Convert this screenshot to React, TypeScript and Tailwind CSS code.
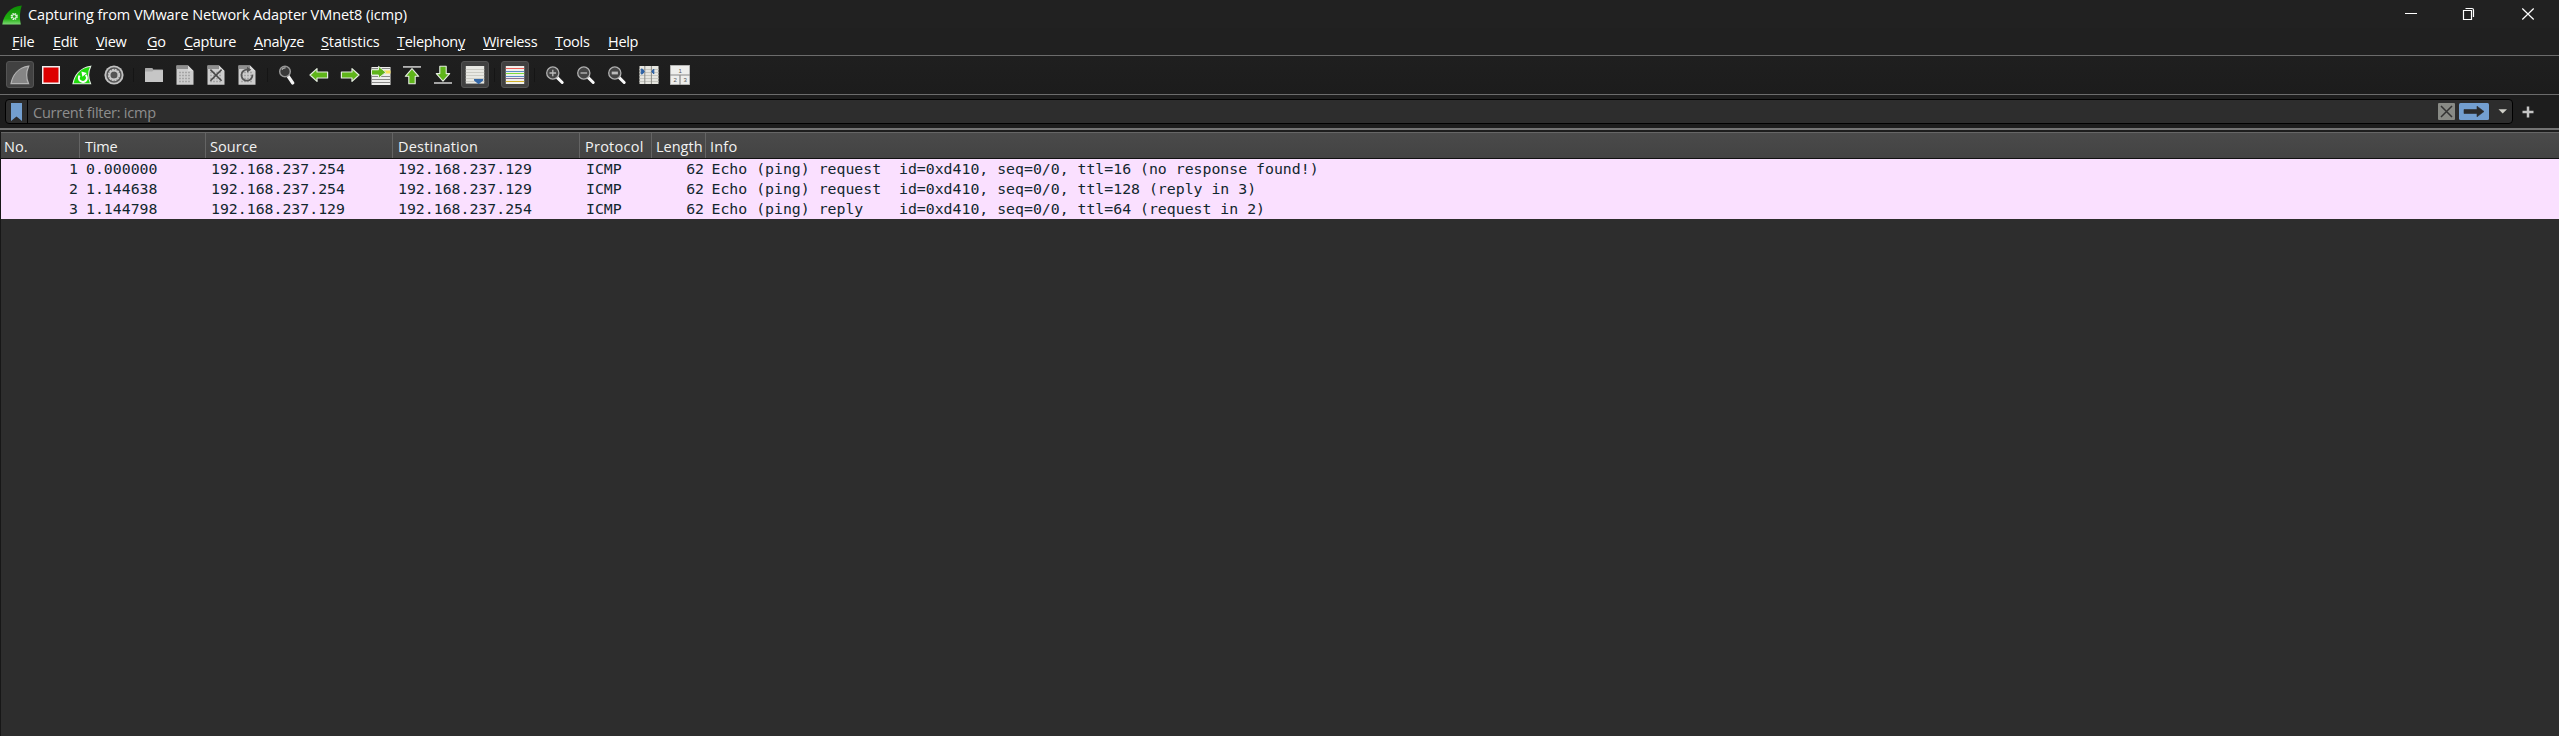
import type { ReactNode } from "react";

const UI = "font-['Open_Sans','Noto_Sans',sans-serif]";

const menus: { key: string; rest: string; width: string; spacing: string }[] = [
  { key: "F", rest: "ile", width: "w-[41px]", spacing: "tracking-[-0.1px]" },
  { key: "E", rest: "dit", width: "w-[43px]", spacing: "tracking-[-0.3px]" },
  { key: "V", rest: "iew", width: "w-[51px]", spacing: "tracking-[-0.3px]" },
  { key: "G", rest: "o", width: "w-[37px]", spacing: "tracking-[-0.2px]" },
  { key: "C", rest: "apture", width: "w-[70px]", spacing: "tracking-[-0.3px]" },
  { key: "A", rest: "nalyze", width: "w-[67px]", spacing: "tracking-[-0.25px]" },
  { key: "S", rest: "tatistics", width: "w-[76px]", spacing: "tracking-[-0.1px]" },
  { key: "T", rest: "elephon", width: "w-[86px]", spacing: "tracking-[-0.3px]" },
  { key: "W", rest: "ireless", width: "w-[72px]", spacing: "tracking-[-0.3px]" },
  { key: "T", rest: "ools", width: "w-[53px]", spacing: "tracking-[-0.3px]" },
  { key: "H", rest: "elp", width: "w-[50px]", spacing: "tracking-[-0.3px]" },
];

const packets = [
  { no: "1", time: "0.000000", src: "192.168.237.254", dst: "192.168.237.129", info: "Echo (ping) request  id=0xd410, seq=0/0, ttl=16 (no response found!)" },
  { no: "2", time: "1.144638", src: "192.168.237.254", dst: "192.168.237.129", info: "Echo (ping) request  id=0xd410, seq=0/0, ttl=128 (reply in 3)" },
  { no: "3", time: "1.144798", src: "192.168.237.129", dst: "192.168.237.254", info: "Echo (ping) reply    id=0xd410, seq=0/0, ttl=64 (request in 2)" },
];

function Icon({ children }: { children: ReactNode }) {
  return (
    <svg viewBox="0 0 20 20" className="block h-5 w-5 shrink-0">
      {children}
    </svg>
  );
}

const FIN = "M1 18.7C2.4 11 7.5 2.8 18.7 1.2C15.8 7.5 16 13 18.6 18.7Z";

const Fin = () => (
  <Icon>
    <path d={FIN} fill="#858585" stroke="#b4b4b4" strokeWidth="1.2" />
  </Icon>
);
const Stop = () => (
  <Icon>
    <rect x="1" y="1" width="18" height="18" fill="#eeeeee" />
    <rect x="2.5" y="2.5" width="15" height="15" fill="#dd0000" />
  </Icon>
);
const Restart = () => (
  <Icon>
    <path d={FIN} fill="#1fdc0b" stroke="#e4f5e2" strokeWidth="1.1" />
    <path d="M7.6 10.6A4 4 0 1 0 13.6 10" fill="none" stroke="#fff" strokeWidth="2" />
    <path d="M9.4 6.4L14.8 8L10.4 11.8Z" fill="#fff" />
  </Icon>
);
const Options = () => (
  <Icon>
    <circle cx="10" cy="10" r="9.6" fill="#c2c2c2" />
    <circle cx="10" cy="10" r="7.7" fill="#555" />
    <circle cx="10" cy="10" r="5" fill="none" stroke="#c8c8c8" strokeWidth="2.4" strokeDasharray="2 .62" />
    <circle cx="10" cy="10" r="4.4" fill="none" stroke="#c8c8c8" strokeWidth="1.6" />
  </Icon>
);
const Folder = () => (
  <Icon>
    <path d="M1 4.5V3.4Q1 3 1.5 3H8Q8.6 3 8.8 3.5L9.2 4.6H18.5Q19 4.6 19 5V16.5Q19 17 18.5 17H1.5Q1 17 1 16.5Z" fill="#aaa" />
    <path d="M1 6.6H8.2L9.6 5.2H19V16.5Q19 17 18.5 17H1.5Q1 17 1 16.5Z" fill="#c6c6c6" />
  </Icon>
);
function Sheet({ children }: { children?: ReactNode }) {
  return (
    <Icon>
      <path d="M1.5 .5H13L18.5 6V19.7H1.5Z" fill="#cdcdcd" />
      <path d="M1.5 .5H13V4H1.5Z" fill="#8f8f8f" />
      <path d="M13 .5L18.5 6H13Z" fill="#dadada" />
      <path d="M4 7.5H16M4 10.5H16M4 13.5H16M4 16.5H16" stroke="#a6a6a6" strokeWidth="1.4" strokeDasharray="2 1" />
      {children}
    </Icon>
  );
}
const CloseFile = () => (
  <Sheet>
    <path d="M4.4 4.6L15.6 15.8M15.6 4.6L4.4 15.8" stroke="#484848" strokeWidth="1.6" />
  </Sheet>
);
const Reload = () => (
  <Sheet>
    <path d="M15.4 9.6A5.5 5.5 0 1 1 10.6 4.7" fill="none" stroke="#555" strokeWidth="1.8" />
    <path d="M10 1.8L14.3 4.7L10 7.6Z" fill="#555" />
  </Sheet>
);
const Find = () => (
  <Icon>
    <path d="M11 11L15.7 18" stroke="#f4f4f4" strokeWidth="3.2" strokeLinecap="round" />
    <circle cx="8" cy="6.5" r="5.3" fill="#3a3a3a" stroke="#969696" strokeWidth="1.5" />
    <path d="M4.9 4.6A4 4 0 0 1 8.6 2.9" fill="none" stroke="#bbb" strokeWidth="1.1" />
  </Icon>
);
const ARROW = "M1 10L8 3.6V7H18.6V13H8V16.4Z";
const Back = () => (
  <Icon>
    <path d={ARROW} fill="#5fb51a" stroke="#e5eddf" strokeWidth="1.2" strokeLinejoin="round" />
  </Icon>
);
const Forward = () => (
  <Icon>
    <path d={ARROW} transform="rotate(180 10 10)" fill="#5fb51a" stroke="#e5eddf" strokeWidth="1.2" strokeLinejoin="round" />
  </Icon>
);
const GoTo = () => (
  <Icon>
    <path d="M.5 2H19.5V20H.5Z" fill="#eeeeec" />
    <path d="M.5 3.5H19.5M.5 11.5H19.5M.5 14.5H19.5M.5 17.5H19.5" stroke="#8a8a88" strokeWidth="1" />
    <path d="M13 5.5H19.5V8.5H13Z" fill="#f8e15a" />
    <path d="M.5 4.8H7.5V1.3L14.8 7.3L7.5 13.2V10H.5Z" fill="#5fb51a" stroke="#e5eddf" strokeWidth="1" />
  </Icon>
);
const First = () => (
  <Icon>
    <path d="M1 1.9H19" stroke="#bdbdbd" strokeWidth="1.7" />
    <path d="M10 3.7L16.7 11.3H13.2V18.7H6.8V11.3H3.3Z" fill="#5fb51a" stroke="#e5eddf" strokeWidth="1.1" strokeLinejoin="round" />
  </Icon>
);
const Last = () => (
  <Icon>
    <path d="M1 18H19" stroke="#bdbdbd" strokeWidth="1.7" />
    <path d="M10 16.2L16.7 8.6H13.2V1.2H6.8V8.6H3.3Z" fill="#5fb51a" stroke="#e5eddf" strokeWidth="1.1" strokeLinejoin="round" />
  </Icon>
);
const AutoScroll = () => (
  <Icon>
    <path d="M.8 1H19.2V18.6H.8Z" fill="#e8e8e3" />
    <path d="M.8 4.5H19.2M.8 7.5H19.2M.8 10.5H19.2M.8 13.5H19.2M.8 16.5H19.2" stroke="#cbcbc4" strokeWidth="1" />
    <path d="M9 14H18.2V15.6L13.6 19.2L9 15.6Z" fill="#3367a8" />
  </Icon>
);
const Colorize = () => (
  <Icon>
    <path d="M.8 1H19.2V19H.8Z" fill="#f0f0ec" />
    <path d="M.8 3.5H19.2" stroke="#ee5f58" strokeWidth="1" />
    <path d="M.8 6.5H19.2" stroke="#5b8fc7" strokeWidth="1" />
    <path d="M.8 8.5H19.2" stroke="#7ddd3e" strokeWidth="1" />
    <path d="M.8 11.5H19.2" stroke="#5b8fc7" strokeWidth="1" />
    <path d="M.8 13.5H19.2" stroke="#8a7097" strokeWidth="1" />
    <path d="M.8 16.5H19.2" stroke="#d1b02b" strokeWidth="1" />
  </Icon>
);
function Zoom({ children }: { children: ReactNode }) {
  return (
    <Icon>
      <path d="M12 12.4L17.2 17.5" stroke="#f8f8f8" strokeWidth="3" strokeLinecap="round" />
      <circle cx="7.8" cy="8" r="6.1" fill="#454545" stroke="#b0b0b0" strokeWidth="1.3" />
      {children}
    </Icon>
  );
}
const ZoomIn = () => <Zoom><path d="M4.5 8H11.1M7.8 4.7V11.3" stroke="#bbb" strokeWidth="1.3" /></Zoom>;
const ZoomOut = () => <Zoom><path d="M4.5 8H11.1" stroke="#bbb" strokeWidth="1.3" /></Zoom>;
const ZoomReset = () => <Zoom><path d="M4.7 8H10.9" stroke="#bbb" strokeWidth="2.8" /></Zoom>;
const Resize = () => (
  <Icon>
    <path d="M.5 1H19.5V19H.5Z" fill="#e6e6e0" />
    <path d="M.5 4.5H19.5M.5 7.5H19.5M.5 10.5H19.5M.5 13.5H19.5M.5 16.5H19.5" stroke="#c6c6bf" strokeWidth="1" />
    <path d="M5.8 1V19M12.4 1V19" stroke="#8b8b86" strokeWidth="1" />
    <path d="M2.2 4L3.4 4L5.3 6.5L3.4 9H2.2Z" fill="#2e62a5" stroke="#2e62a5" />
    <path d="M14.8 4V9L12.8 6.5Z" fill="#2e62a5" stroke="#2e62a5" />
  </Icon>
);
const Panes = () => (
  <svg viewBox="0 0 20 20" className="block h-5 w-5 shrink-0 font-['Liberation_Sans',sans-serif] text-[6px]">
    <path d="M.2 .2H19.8V19.8H.2Z" fill="#eeeeec" stroke="#aaa" strokeWidth=".8" />
    <path d="M0 10H20M10 10V20" stroke="#888" strokeWidth="1.2" />
    <text x="8.6" y="7.6" fill="#555">1</text>
    <text x="3.6" y="17.1" fill="#555">2</text>
    <text x="13.6" y="17.1" fill="#555">3</text>
  </svg>
);

const groups: { icon: () => ReactNode; checked?: boolean }[][] = [
  [{ icon: Fin, checked: true }, { icon: Stop }, { icon: Restart }, { icon: Options }],
  [{ icon: Folder }, { icon: () => <Sheet /> }, { icon: CloseFile }, { icon: Reload }],
  [{ icon: Find }, { icon: Back }, { icon: Forward }, { icon: GoTo }, { icon: First }, { icon: Last }, { icon: AutoScroll, checked: true }],
  [{ icon: Colorize, checked: true }],
  [{ icon: ZoomIn }, { icon: ZoomOut }, { icon: ZoomReset }, { icon: Resize }, { icon: Panes }],
];

function TitleBar() {
  return (
    <div className="flex h-7 items-center bg-[#212121] pl-[2px]">
      <svg viewBox="0 0 20 20" className="mt-px h-5 w-5">
        <defs>
          <linearGradient id="logo" x1="0" y1="0" x2="0" y2="1">
            <stop offset="0" stopColor="#0d8a05" />
            <stop offset=".7" stopColor="#20b010" />
            <stop offset="1" stopColor="#7fd877" />
          </linearGradient>
        </defs>
        <path d="M.3 19.5C1.5 10.5 8 1.6 19.8 .6C17.6 6.5 17.4 13 18.8 19.5Z" fill="url(#logo)" />
        <circle cx="12.2" cy="11.5" r="2.8" fill="none" stroke="#e2f4e0" strokeWidth="1.6" strokeDasharray="1.5 .7" />
        <circle cx="12.2" cy="11.5" r="1.9" fill="none" stroke="#e2f4e0" strokeWidth="1" />
      </svg>
      <span className="mt-px ml-[6px] grow text-[14.5px] tracking-[-0.07px] text-white">Capturing from VMware Network Adapter VMnet8 (icmp)</span>
      <svg viewBox="0 0 160 28" className="h-7 w-[160px]" fill="none" stroke="#fff">
        <path d="M6 13.5H18" />
        <path d="M64.5 10.5H72.5V19.5H64.5ZM66.5 8.5H73Q74.5 8.5 74.5 10V17" strokeWidth="1.2" />
        <path d="M123.3 8.5L134.7 19.5M134.7 8.5L123.3 19.5" strokeWidth="1.2" />
      </svg>
    </div>
  );
}

function MenuBar() {
  return (
    <div className="flex h-[27px] items-center bg-[#202020] pl-[12px] text-[14.5px] text-white">
      {menus.map((m) => (
        <div key={m.key + m.rest} className={`${m.width} ${m.spacing} shrink-0 whitespace-nowrap`}>
          <span className="underline decoration-1 underline-offset-2">{m.key}</span>
          {m.rest}
          {m.rest === "elephon" && <span className="underline decoration-1 underline-offset-2">y</span>}
        </div>
      ))}
    </div>
  );
}

function ToolBar() {
  return (
    <div className="flex h-[39px] items-start border-t border-[#6c6c6c] bg-gradient-to-b from-[#1f1f1f] to-[#1c1c1c] pt-[5px] pl-[4.4px]">
      {groups.map((g, i) => (
        <div key={i} className="flex items-center">
          {i > 0 && (
            <div className="flex w-[9px] justify-center">
              <div className="h-[14px] w-px bg-[#151515]" />
            </div>
          )}
          {g.map(({ icon: I, checked }, j) => (
            <div key={j} className="flex w-[31.2px] justify-center">
              <div className={checked ? "flex h-[27px] w-7 items-center justify-center rounded-[3px] border border-[#545454] bg-[#414141]" : "flex h-[27px] w-7 items-center justify-center"}>
                <I />
              </div>
            </div>
          ))}
        </div>
      ))}
    </div>
  );
}

function FilterBar() {
  return (
    <div className="flex h-[34px] items-start border-t border-[#6c6c6c] bg-[#1d1d1d] pt-1 pl-[5px]">
      <div className="flex h-[25px] w-[2508px] items-center rounded-[4px] border border-black bg-[#2d2d2d]">
        <div className="flex h-full w-[22px] items-center justify-center border-r border-black">
          <svg viewBox="0 0 11 18" className="h-[18px] w-[11px]">
            <path d="M0 0H11V18L5.5 13.5L0 18Z" fill="#739fd0" />
          </svg>
        </div>
        <span className="mt-[2px] ml-[5px] grow text-[14.5px] tracking-[-0.25px] text-[#8d8d8d]">Current filter: icmp</span>
        <svg viewBox="0 0 74 18" className="h-[18px] w-[74px]">
          <rect x="0" y="0" width="17" height="17" rx="1" fill="#888a85" />
          <path d="M3 3L14 14M14 3L3 14" stroke="#333" strokeWidth="1.5" />
          <rect x="21" y="0" width="30" height="17" rx="1.5" fill="#739fd0" />
          <path d="M26 6.5H39V3.2L46 8.5L39 13.8V10.5H26Z" fill="#2b2b2b" stroke="#2b2b2b" strokeWidth=".6" strokeLinejoin="round" />
          <path d="M60.5 6.2H69L64.7 10.5Z" fill="#cfcfc8" />
        </svg>
      </div>
      <svg viewBox="0 0 12 12" className="mt-[7px] ml-[9px] h-3 w-3">
        <path d="M6 .5V11.5M.5 6H11.5" stroke="#c4c4c4" strokeWidth="2.5" />
      </svg>
    </div>
  );
}

function Head({ label, className }: { label: string; className: string }) {
  return <div className={`${className} flex h-full shrink-0 items-center pt-[2px] whitespace-nowrap`}>{label}</div>;
}

function PacketList() {
  return (
    <div className="flex grow flex-col border-l border-[#171717] bg-[#2d2d2d]">
      <div className="flex h-[27px] shrink-0 items-center border-t border-b border-t-[#666] border-b-[#101010] bg-gradient-to-b from-[#4a4a4a] to-[#434343] text-[14.5px] text-[#f2f2f2]">
        <Head label="No." className="w-[79px] border-r border-[#646464] pl-[3px]" />
        <Head label="Time" className="w-[126px] border-r border-[#646464] pl-[5px] tracking-[-0.2px]" />
        <Head label="Source" className="w-[187px] border-r border-[#646464] pl-[4px] tracking-[0.1px]" />
        <Head label="Destination" className="w-[187px] border-r border-[#646464] pl-[5px] tracking-[0.2px]" />
        <Head label="Protocol" className="w-[72px] border-r border-[#646464] pl-[5px] tracking-[0.25px]" />
        <Head label="Length" className="w-[54px] border-r border-[#646464] pl-[4px]" />
        <Head label="Info" className="grow pl-[4px] tracking-[0.2px]" />
      </div>
      {packets.map((p) => (
        <div key={p.no} className="flex h-5 shrink-0 items-center bg-[#fae0ff] font-['DejaVu_Sans_Mono',monospace] text-[14.83px] leading-5 whitespace-pre text-[#12272e]">
          <div className="w-[77px] text-right">{p.no}</div>
          <div className="w-[125px] pl-[8px]">{p.time}</div>
          <div className="w-[187px] pl-[8px]">{p.src}</div>
          <div className="w-[188px] pl-[8px]">{p.dst}</div>
          <div className="w-[73px] pl-[8px]">ICMP</div>
          <div className="w-[53px] text-right">62</div>
          <div className="pl-[7.5px]">{p.info}</div>
        </div>
      ))}
    </div>
  );
}

export default function App() {
  return (
    <div className={`${UI} flex h-[736px] w-[2559px] flex-col overflow-hidden bg-[#1d1d1d]`}>
      <TitleBar />
      <MenuBar />
      <ToolBar />
      <FilterBar />
      <div className="mb-[2px] h-[2px] shrink-0 bg-[#747474]" />
      <PacketList />
    </div>
  );
}
